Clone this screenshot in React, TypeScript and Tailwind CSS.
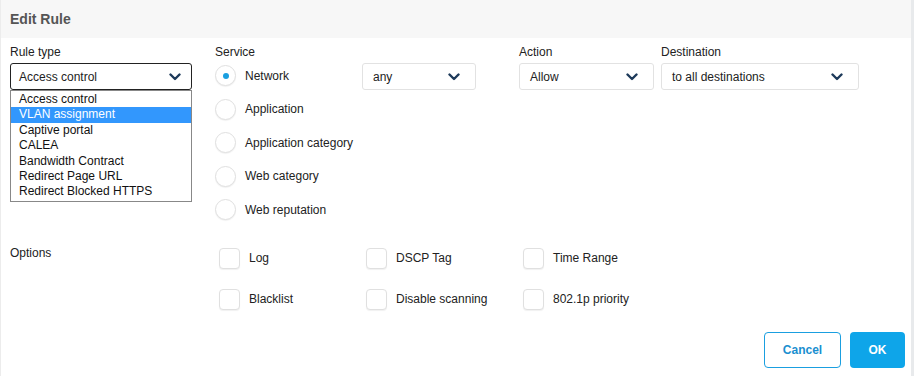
import React from 'react';

const Chevron: React.FC = () => (
  <svg width="12" height="8" viewBox="0 0 12 8" fill="none" stroke="#1d3a5a" strokeWidth={2.4} strokeLinecap="round" strokeLinejoin="round">
    <polyline points="1.5,1.5 6,6 10.5,1.5" />
  </svg>
);

const Select: React.FC<{ value: string; className: string; focused?: boolean }> = ({ value, className, focused }) => (
  <div
    className={
      focused
        ? `${className} h-[27px] flex items-center justify-between pl-[8px] pr-[10px] border border-[#222] rounded-[3px] bg-white`
        : `${className} h-[27px] flex items-center justify-between pl-[10px] pr-[15px] border border-[#e2e2e2] rounded-[3px] bg-white`
    }
  >
    <span className="text-[12px] text-[#222]">{value}</span>
    <Chevron />
  </div>
);

const Radio: React.FC<{ label: string; checked?: boolean }> = ({ label, checked }) => (
  <div className="h-[33.5px] flex items-center">
    <div className="w-[21px] h-[21px] rounded-full border border-[#e0e0e0] shadow-[0_1px_1px_rgba(0,0,0,0.06)] flex items-center justify-center bg-white">
      {checked && <div className="w-[6px] h-[6px] rounded-full bg-[#1a9fe0]" />}
    </div>
    <span className="ml-[9px] text-[12px] text-[#222]">{label}</span>
  </div>
);

const Check: React.FC<{ label: string; width: string }> = ({ label, width }) => (
  <div className={`${width} flex items-center`}>
    <div className="w-[21px] h-[21px] rounded-[4px] border border-[#e0e0e0] shadow-[0_1px_1px_rgba(0,0,0,0.06)] bg-white" />
    <span className="ml-[9px] text-[12px] text-[#222]">{label}</span>
  </div>
);

const ruleTypes = [
  'Access control',
  'VLAN assignment',
  'Captive portal',
  'CALEA',
  'Bandwidth Contract',
  'Redirect Page URL',
  'Redirect Blocked HTTPS',
];

export default function App() {
  return (
    <div
      className="w-[914px] h-[376px] bg-white border-l border-[#ececec] border-r-[3px] border-r-[#e8eaec] flex flex-col"
      style={{ fontFamily: '"Liberation Sans", Arial, sans-serif' }}
    >
      <div className="h-[38px] bg-[#f7f7f7] flex items-center pl-[9px]">
        <h2 className="text-[14px] font-bold text-[#555]">Edit Rule</h2>
      </div>

      <div className="flex pt-[7px] pl-[9px]">
        {/* Rule type */}
        <div className="w-[205px] relative">
          <div className="text-[12px] leading-[14px] text-[#222]">Rule type</div>
          <Select value="Access control" className="w-[182px] mt-[4px]" focused />
          <div className="absolute left-0 top-[45px] w-[182px] bg-white border border-[#888] py-[1px] z-10">
            {ruleTypes.map((t) => (
              <div
                key={t}
                className={
                  t === 'VLAN assignment'
                    ? 'h-[15.4px] leading-[15px] pl-[8px] text-[12px] bg-[#3297fd] text-white'
                    : 'h-[15.4px] leading-[15px] pl-[8px] text-[12px] text-[#111]'
                }
              >
                {t}
              </div>
            ))}
          </div>
        </div>

        {/* Service */}
        <div className="w-[304px]">
          <div className="text-[12px] leading-[14px] text-[#222]">Service</div>
          <div className="flex mt-[4px]">
            <div className="w-[147px] -mt-[4px]">
              <Radio label="Network" checked />
              <Radio label="Application" />
              <Radio label="Application category" />
              <Radio label="Web category" />
              <Radio label="Web reputation" />
            </div>
            <Select value="any" className="w-[114px]" />
          </div>
        </div>

        {/* Action */}
        <div className="w-[142px]">
          <div className="text-[12px] leading-[14px] text-[#222]">Action</div>
          <Select value="Allow" className="w-[135px] mt-[4px]" />
        </div>

        {/* Destination */}
        <div>
          <div className="text-[12px] leading-[14px] text-[#222]">Destination</div>
          <Select value="to all destinations" className="w-[198px] mt-[4px]" />
        </div>
      </div>

      <div className="flex pl-[9px] mt-[18px]">
        <div className="w-[209px] text-[12px] leading-[14px] text-[#222] pt-[1px]">Options</div>
        <div className="flex flex-col gap-[20px] pt-[3px]">
          <div className="flex h-[21px]">
            <Check label="Log" width="w-[147px]" />
            <Check label="DSCP Tag" width="w-[157px]" />
            <Check label="Time Range" width="w-[150px]" />
          </div>
          <div className="flex h-[21px]">
            <Check label="Blacklist" width="w-[147px]" />
            <Check label="Disable scanning" width="w-[157px]" />
            <Check label="802.1p priority" width="w-[150px]" />
          </div>
        </div>
      </div>

      <div className="flex justify-end gap-[9px] pr-[6px] mt-auto mb-[8px]">
        <button className="w-[77px] h-[36px] rounded-[4px] border border-[#1a9fe0] text-[#1a8fd0] text-[12px] font-bold bg-white">
          Cancel
        </button>
        <button className="w-[55px] h-[36px] rounded-[4px] bg-[#0ea5e9] text-white text-[12px] font-bold">
          OK
        </button>
      </div>
    </div>
  );
}
